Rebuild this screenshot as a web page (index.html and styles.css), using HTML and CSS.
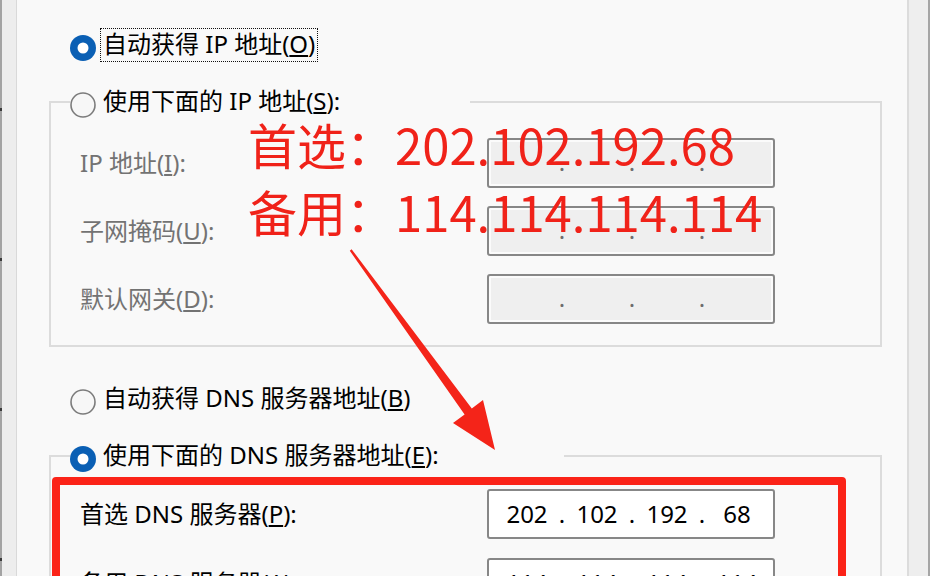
FILE: index.html
```html
<!DOCTYPE html>
<html lang="zh-CN">
<head>
<meta charset="utf-8">
<title>Internet 协议版本 4 (TCP/IPv4) 属性</title>
<link rel="stylesheet" href="styles.css">
</head>
<body>
<div class="window">
  <div class="edge-left"></div>
  <main class="panel">
    <div class="radio-row outer">
      <svg class="radio" viewBox="0 0 26 26" width="26" height="26"><circle cx="13" cy="13" r="13" fill="#0a5fb4"/><circle cx="13" cy="13" r="5.5" fill="#fff"/></svg>
      <span class="label focus">自动获得 IP 地址(<u>O</u>)</span>
    </div>

    <fieldset class="group">
      <legend class="legend legend-ip">
        <span class="radio-row">
          <svg class="radio" viewBox="0 0 26 26" width="26" height="26"><circle cx="13" cy="13" r="12" fill="#f7f7f7" stroke="#7c7c7c" stroke-width="1.6"/></svg>
          <span class="label">使用下面的 IP 地址(<u>S</u>):</span>
        </span>
      </legend>
      <div class="group-body body-ip">
        <span class="field-label disabled">IP 地址(<u>I</u>):</span>
        <div class="ipbox disabled"><span class="seg"></span><span class="dot">.</span><span class="seg"></span><span class="dot">.</span><span class="seg"></span><span class="dot">.</span><span class="seg"></span></div>
        <span class="field-label disabled">子网掩码(<u>U</u>):</span>
        <div class="ipbox disabled"><span class="seg"></span><span class="dot">.</span><span class="seg"></span><span class="dot">.</span><span class="seg"></span><span class="dot">.</span><span class="seg"></span></div>
        <span class="field-label disabled">默认网关(<u>D</u>):</span>
        <div class="ipbox disabled"><span class="seg"></span><span class="dot">.</span><span class="seg"></span><span class="dot">.</span><span class="seg"></span><span class="dot">.</span><span class="seg"></span></div>
      </div>
    </fieldset>

    <div class="radio-row outer row-dns-auto">
      <svg class="radio" viewBox="0 0 26 26" width="26" height="26"><circle cx="13" cy="13" r="12" fill="#f7f7f7" stroke="#7c7c7c" stroke-width="1.6"/></svg>
      <span class="label">自动获得 DNS 服务器地址(<u>B</u>)</span>
    </div>

    <fieldset class="group">
      <legend class="legend legend-dns">
        <span class="radio-row">
          <svg class="radio" viewBox="0 0 26 26" width="26" height="26"><circle cx="13" cy="13" r="13" fill="#0a5fb4"/><circle cx="13" cy="13" r="5.5" fill="#fff"/></svg>
          <span class="label">使用下面的 DNS 服务器地址(<u>E</u>):</span>
        </span>
      </legend>
      <div class="group-body body-dns">
        <span class="field-label">首选 DNS 服务器(<u>P</u>):</span>
        <div class="ipbox"><span class="seg">202</span><span class="dot">.</span><span class="seg">102</span><span class="dot">.</span><span class="seg">192</span><span class="dot">.</span><span class="seg">68</span></div>
        <span class="field-label">备用 DNS 服务器(<u>A</u>):</span>
        <div class="ipbox"><span class="seg">114</span><span class="dot">.</span><span class="seg">114</span><span class="dot">.</span><span class="seg">114</span><span class="dot">.</span><span class="seg">114</span></div>
      </div>
    </fieldset>
  </main>
  <div class="edge-right"></div>
</div>

<div class="note-text">
  <div>首选：202.102.192.68</div>
  <div>备用：114.114.114.114</div>
</div>
<svg class="note-arrow" viewBox="0 0 930 576" width="930" height="576">
  <polygon points="351.6,249.2 471.8,408.6 483,400 495,450 453,423 464.6,414.4 349.8,250.8" fill="#f42419"/>
</svg>
<div class="note-box"></div>
</body>
</html>
```

FILE: styles.css
```css
* { box-sizing: border-box; }

html, body {
  margin: 0;
  padding: 0;
}

body {
  position: relative;
  width: 930px;
  height: 576px;
  overflow: hidden;
  background: #f9f9f9;
  color: #000;
  font-family: "Noto Sans", "Noto Sans CJK SC", sans-serif;
  font-size: 24px;
}

.window {
  display: flex;
  height: 576px;
}

.edge-left {
  flex: none;
  width: 17px;
  background:
    repeating-linear-gradient(to bottom, transparent 0 108px, #3a3a3a 108px 111px, transparent 111px 150px) 0 0 / 2px 100% no-repeat,
    linear-gradient(to right, #a3a3a3 0 2px, #ededed 2px 16px, #d9d9d9 16px 17px);
}

.edge-right {
  flex: none;
  width: 23px;
  background: linear-gradient(to right, #dcdcdc 0 2px, #eeeeee 2px 21px, #a5a5a5 21px 23px);
}

.panel {
  flex: 1;
  padding: 28px 25px 0 32px;
  background: #f9f9f9;
}

/* radio rows */
.radio-row {
  display: flex;
  align-items: center;
  height: 34px;
  white-space: nowrap;
}

.radio-row.outer {
  padding-left: 21px;
}

.radio {
  flex: none;
  display: block;
  margin-top: 6px;
}

.label {
  margin-left: 4px;
  padding: 0 2px 3px 2px;
  border: 1px dotted transparent;
  line-height: 29px;
}

.label.focus {
  border-color: #111;
}

.row-dns-auto {
  margin-top: 35px;
}

/* group boxes */
.group {
  margin: 23px 0 0 0;
  padding: 0;
  min-width: 0;
  border: 2px solid #dcdcdc;
}

.legend {
  padding: 0;
  margin-left: 19px;
}

.legend-ip { width: 400px; }
.legend-dns { width: 494px; }

.group-body {
  display: grid;
  grid-template-columns: 407px 288px;
  align-items: center;
  padding-left: 29px;
}

.body-ip {
  padding-top: 19px;
  padding-bottom: 21px;
  row-gap: 18px;
}

.body-dns {
  padding-top: 16px;
  padding-bottom: 20px;
  row-gap: 19px;
}

.field-label {
  white-space: nowrap;
  padding-bottom: 4px;
}

.disabled {
  color: #737373;
}

/* IP address control */
.ipbox {
  display: flex;
  align-items: center;
  height: 50px;
  padding-left: 9px;
  padding-bottom: 2px;
  border: 2px solid #878787;
  border-radius: 3px;
  background: #ffffff;
  color: #000;
}

.ipbox.disabled {
  background: #efefef;
  box-shadow: inset 0 0 0 2px #fbfbfb;
  color: #6d6d6d;
  padding-bottom: 4px;
}

.seg {
  width: 58px;
  text-align: center;
}

.dot {
  width: 12px;
  text-align: center;
}

/* annotations drawn over the screenshot */
.note-text {
  position: absolute;
  left: 248px;
  top: 110px;
  color: #f02219;
  font-family: "Noto Sans CJK SC", sans-serif;
  font-size: 49px;
  line-height: 67px;
  white-space: nowrap;
}

.note-arrow {
  position: absolute;
  left: 0;
  top: 0;
  pointer-events: none;
}

.note-box {
  position: absolute;
  left: 52px;
  top: 477px;
  width: 794px;
  height: 160px;
  border: 8px solid #fb2318;
  border-radius: 4px;
}
```
